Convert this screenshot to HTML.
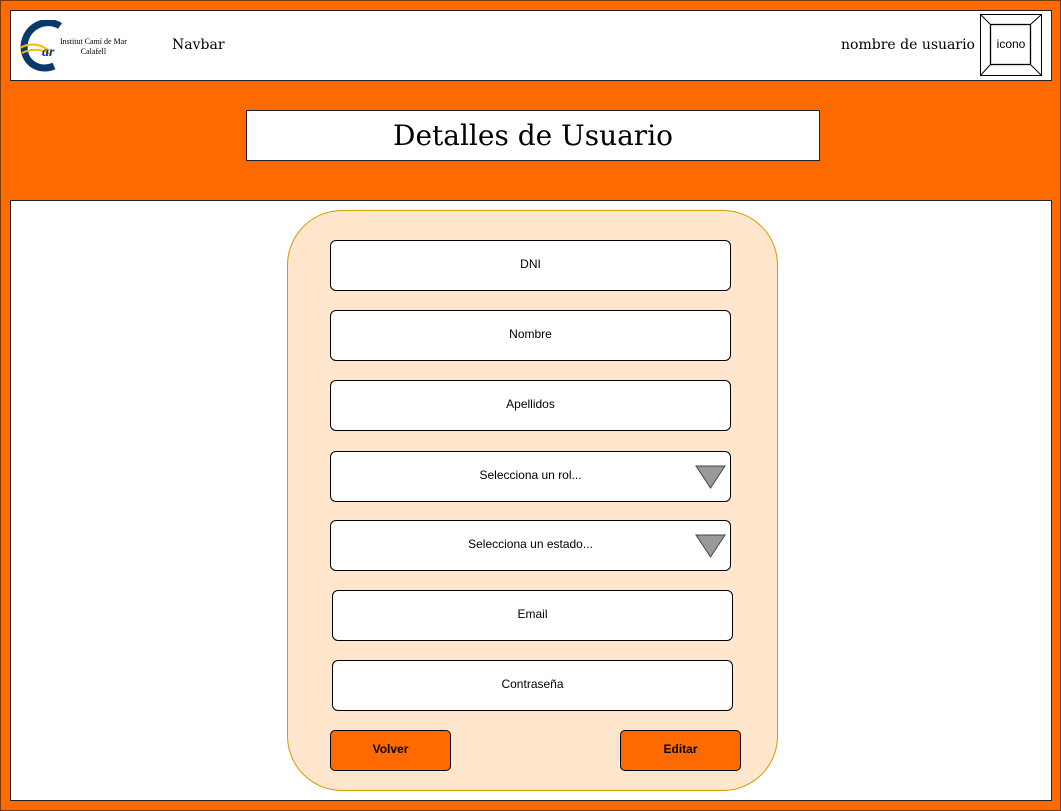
<!DOCTYPE html>
<html><head><style>
body{margin:0;width:1061px;height:811px;background:#FF6A00;position:relative;overflow:hidden;font-family:"Liberation Sans",sans-serif}
.frame{position:absolute;left:0;top:0;width:1059px;height:809px;border:1px solid #7a3a00}
.box{position:absolute;background:#fff;border:1px solid #222}
.serif{font-family:"DejaVu Serif","Liberation Serif",serif}
.f{position:absolute;left:330px;width:399px;height:49px;background:#fff;border:1px solid #000;border-radius:6px;font-size:12px;display:flex;align-items:center;justify-content:center;padding-bottom:3px;box-sizing:content-box;height:46px}
.tri{position:absolute;right:4px;top:13px}
.b{position:absolute;top:730px;width:119px;height:36px;padding-bottom:3px;background:#FF6A00;border:1px solid #000;border-radius:5px;font-size:12px;font-weight:bold;display:flex;align-items:center;justify-content:center}
</style></head><body>
<div class="frame"></div>
<div class="box" style="left:10px;top:10px;width:1040px;height:69px"></div>
<svg style="position:absolute;left:18px;top:20px" width="50" height="52" viewBox="0 0 50 52">
<path d="M42 6 C30 -2 8 4 6 26 C6 44 22 52 36 46" fill="none" stroke="#0b3a6a" stroke-width="7"/>
<path d="M2 28 Q16 20 30 30 M4 33 Q18 26 32 34" stroke="#f0c000" stroke-width="2" fill="none"/>
<text x="24" y="36" font-size="14" font-style="italic" font-weight="bold" fill="#0b3a6a" font-family="Liberation Serif">ar</text>
</svg>
<div style="position:absolute;left:60px;top:37px;font-size:8px;font-family:'Liberation Serif',serif;line-height:10px;text-align:center">Institut Camí de Mar<br>Calafell</div>
<div class="serif" style="position:absolute;left:172px;top:37px;font-size:14px">Navbar</div>
<div class="serif" style="position:absolute;right:86px;top:37px;font-size:14px">nombre de usuario</div>
<svg style="position:absolute;left:980px;top:14px" width="63" height="63">
<rect x="0.5" y="0.5" width="61" height="61" fill="#fff" stroke="#000"/>
<rect x="10.5" y="10.5" width="40" height="40" fill="#fff" stroke="#000" stroke-width="1.3"/>
<path d="M0 0L10 10M62 0L51 10M0 62L10 51M62 62L51 51" stroke="#000"/>
<text x="31" y="34" font-size="12" text-anchor="middle" font-family="Liberation Sans">icono</text>
</svg>
<div class="box serif" style="left:246px;top:110px;width:572px;height:49px;font-size:28px;display:flex;align-items:center;justify-content:center">Detalles de Usuario</div>
<div class="box" style="left:10px;top:200px;width:1040px;height:599px"></div>
<div style="position:absolute;left:287px;top:210px;width:489px;height:579px;background:#FFE6CC;border:1px solid #D79B00;border-radius:55px"></div>
<div class="f" style="top:240px">DNI</div>
<div class="f" style="top:310px">Nombre</div>
<div class="f" style="top:380px">Apellidos</div>
<div class="f" style="top:451px">Selecciona un rol...<svg class="tri" width="31" height="24"><path d="M1 1H30L15.5 23Z" fill="#999" stroke="#444"/></svg></div>
<div class="f" style="top:520px">Selecciona un estado...<svg class="tri" width="31" height="24"><path d="M1 1H30L15.5 23Z" fill="#999" stroke="#444"/></svg></div>
<div class="f" style="top:590px;left:332px">Email</div>
<div class="f" style="top:660px;left:332px">Contraseña</div>
<div class="b" style="left:330px">Volver</div>
<div class="b" style="left:620px">Editar</div>
</body></html>
